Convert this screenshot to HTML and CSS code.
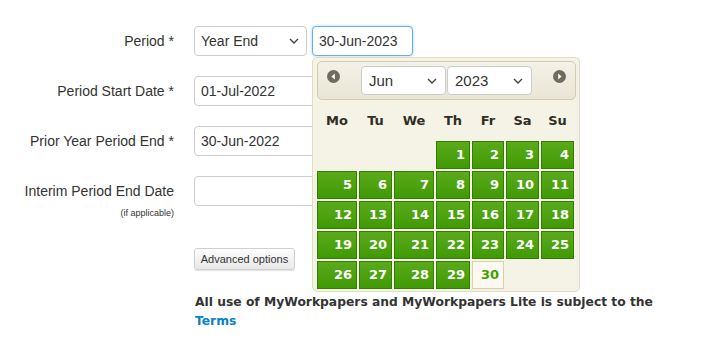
FILE: index.html
```html
<!DOCTYPE html>
<html>
<head>
<meta charset="utf-8">
<link rel="stylesheet" href="styles.css">
</head>
<body>
<div class="page">
  <div class="form">
    <div class="row">
      <label class="lbl">Period *</label>
      <div class="fields">
        <div class="select period-select"><span>Year End</span><svg class="chev" width="10" height="6" viewBox="0 0 10 6"><path d="M1 1l4 4 4-4" fill="none" stroke="#444" stroke-width="1.4"/></svg></div>
        <div class="input end-input focus">30-Jun-2023</div>
      </div>
    </div>
    <div class="row">
      <label class="lbl">Period Start Date *</label>
      <div class="fields"><div class="input wide">01-Jul-2022</div></div>
    </div>
    <div class="row">
      <label class="lbl">Prior Year Period End *</label>
      <div class="fields"><div class="input wide">30-Jun-2022</div></div>
    </div>
    <div class="row interim">
      <div class="lbl stack"><span>Interim Period End Date</span><small>(if applicable)</small></div>
      <div class="fields"><div class="input wide"></div></div>
    </div>
    <div class="row btnrow">
      <div class="lbl"></div>
      <div class="fields"><button class="btn">Advanced options</button></div>
    </div>
    <div class="row note">
      <div class="lbl"></div>
      <p class="terms">All use of MyWorkpapers and MyWorkpapers Lite is subject to the<br><a href="#">Terms</a></p>
    </div>
  </div>

  <div class="datepicker">
    <div class="dp-head">
      <span class="nav prev"><svg width="13" height="13" viewBox="0 0 13 13"><circle cx="6.5" cy="6.5" r="6.5" fill="#6f6b5e"/><path d="M7.8 3.6v5.8L4.4 6.5z" fill="#fff"/></svg></span>
      <div class="dp-selects">
        <div class="select dp-sel"><span>Jun</span><svg class="chev" width="10" height="6" viewBox="0 0 10 6"><path d="M1 1l4 4 4-4" fill="none" stroke="#444" stroke-width="1.4"/></svg></div>
        <div class="select dp-sel"><span>2023</span><svg class="chev" width="10" height="6" viewBox="0 0 10 6"><path d="M1 1l4 4 4-4" fill="none" stroke="#444" stroke-width="1.4"/></svg></div>
      </div>
      <span class="nav next"><svg width="13" height="13" viewBox="0 0 13 13"><circle cx="6.5" cy="6.5" r="6.5" fill="#6f6b5e"/><path d="M5.2 3.6v5.8l3.4-2.9z" fill="#fff"/></svg></span>
    </div>
    <div class="dp-grid">
      <div class="dow">Mo</div><div class="dow">Tu</div><div class="dow">We</div><div class="dow">Th</div><div class="dow">Fr</div><div class="dow">Sa</div><div class="dow">Su</div>
      <div class="empty"></div><div class="empty"></div><div class="empty"></div>
      <div class="day">1</div><div class="day">2</div><div class="day">3</div><div class="day">4</div>
      <div class="day">5</div><div class="day">6</div><div class="day">7</div><div class="day">8</div><div class="day">9</div><div class="day">10</div><div class="day">11</div>
      <div class="day">12</div><div class="day">13</div><div class="day">14</div><div class="day">15</div><div class="day">16</div><div class="day">17</div><div class="day">18</div>
      <div class="day">19</div><div class="day">20</div><div class="day">21</div><div class="day">22</div><div class="day">23</div><div class="day">24</div><div class="day">25</div>
      <div class="day">26</div><div class="day">27</div><div class="day">28</div><div class="day">29</div><div class="day today">30</div>
    </div>
  </div>
</div>
</body>
</html>
```

FILE: styles.css
```css
html, body {
  margin: 0;
  padding: 0;
  background: #fff;
}
.page {
  position: relative;
  width: 710px;
  height: 341px;
  font-family: "Liberation Sans", Arial, sans-serif;
  color: #333;
  overflow: hidden;
}
.form {
  padding-top: 26px;
  display: flex;
  flex-direction: column;
}
.row {
  display: grid;
  grid-template-columns: 174px 1fr;
  column-gap: 20px;
  height: 50px;
}
.lbl {
  text-align: right;
  font-size: 14px;
  line-height: 30px;
  color: #333;
}
.stack {
  display: flex;
  flex-direction: column;
  align-items: flex-end;
  line-height: 30px;
}
.stack small {
  font-size: 9px;
  line-height: 12px;
  margin-top: 1px;
  color: #333;
}
.interim { height: 72px; }
.fields {
  display: flex;
  gap: 5px;
  align-items: flex-start;
}
.input, .select {
  box-sizing: border-box;
  height: 30px;
  border: 1px solid #ccc;
  border-radius: 4px;
  background: #fff;
  font-size: 14px;
  line-height: 28px;
  padding: 0 6px;
  color: #333;
}
.select {
  display: flex;
  align-items: center;
  justify-content: space-between;
  padding: 0 7px 0 6px;
}
.period-select { width: 113px; }
.end-input { width: 101px; }
.focus { border-color: #66afe9; box-shadow: 0 0 3px rgba(102,175,233,.6); }
.wide { width: 220px; }
.btnrow { height: 44px; }
.btn {
  box-sizing: border-box;
  height: 22px;
  width: 101px;
  margin-top: 0;
  border: 1px solid #d0d0d0;
  border-radius: 3px;
  background: linear-gradient(#fdfdfd, #e8e8e8);
  box-shadow: 0 1px 1px rgba(0,0,0,.12);
  font-family: "Liberation Sans", Arial, sans-serif;
  font-size: 11px;
  color: #333;
  padding: 0;
}
.note { height: auto; }
.terms {
  margin: 0;
  font-family: "DejaVu Sans", Verdana, sans-serif;
  font-weight: bold;
  font-size: 12.3px;
  line-height: 19px;
  color: #333;
  margin-left: 1px;
  margin-top: 1px;
}
.terms a {
  color: #0a82c8;
  text-decoration: none;
}

.datepicker {
  position: absolute;
  left: 312px;
  top: 57px;
  width: 268px;
  height: 235px;
  box-sizing: border-box;
  background: #f5f3e5;
  border: 1px solid #e2dcc4;
  border-radius: 5px;
  padding: 3px 3px 0 4px;
  font-family: "DejaVu Sans", Verdana, sans-serif;
}
.dp-head {
  box-sizing: border-box;
  height: 39px;
  border: 1px solid #d4ccb0;
  border-radius: 5px;
  background: linear-gradient(#f4f1e7, #e9e5d6);
  display: flex;
  align-items: center;
  justify-content: space-between;
  padding: 0 9px 0 9px;
}
.nav { display: flex; margin-top: -8px; }
.dp-selects { display: flex; gap: 1px; }
.dp-sel {
  width: 85px;
  height: 29px;
  font-family: "Liberation Sans", Arial, sans-serif;
  font-size: 15px;
  padding: 0 8px 0 7px;
}
.dp-grid {
  display: grid;
  grid-template-columns: 40px 33px 40px 34px 32px 33px 33px;
  grid-template-rows: 39px;
  grid-auto-rows: 28px;
  column-gap: 2px;
  row-gap: 2px;
}
.dow {
  text-align: center;
  font-weight: bold;
  font-size: 13px;
  line-height: 41px;
  color: #312e25;
}
.day {
  box-sizing: border-box;
  border: 1px solid #327e04;
  background: linear-gradient(#5aaa1c, #409a04);
  color: #fff;
  font-weight: bold;
  font-size: 13px;
  text-align: right;
  line-height: 26px;
  padding-right: 4px;
}
.day.today {
  background: #fbf9f0;
  border-color: #d7cfae;
  color: #459e00;
}
```
